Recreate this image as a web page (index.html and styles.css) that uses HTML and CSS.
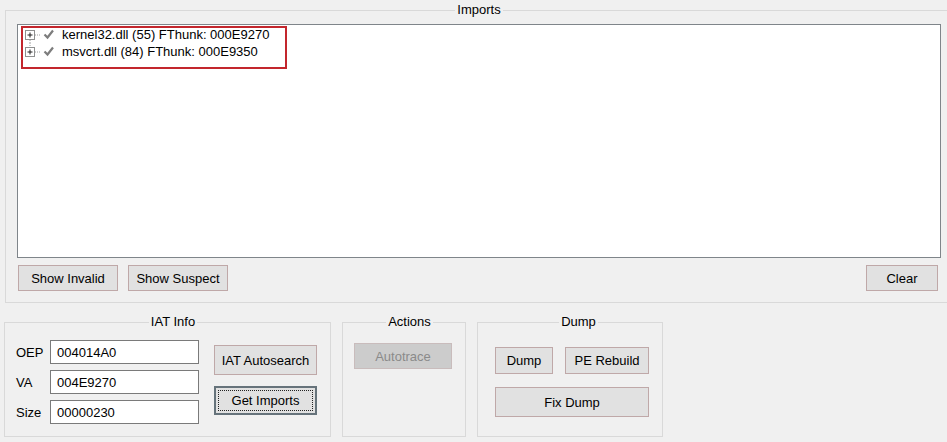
FILE: index.html
```html
<!DOCTYPE html>
<html>
<head>
<meta charset="utf-8">
<link rel="stylesheet" href="styles.css">
</head>
<body>
<div class="app">
  <fieldset class="group imports">
    <legend>Imports</legend>
    <div class="tree">
      <div class="tree-row">
        <svg class="tree-ico" width="44" height="17" viewBox="0 0 44 17">
          <rect x="7.5" y="4.5" width="9" height="9" fill="#fff" stroke="#8e8f8f"/>
          <path d="M9.5 9H14.5M12 6.5V11.5" stroke="#1f1f1f" stroke-width="1"/>
          <path d="M17 9H23" stroke="#a0a0a0" stroke-dasharray="1 1"/>
          <path d="M12 14V17" stroke="#a0a0a0" stroke-dasharray="1 1"/>
          <path d="M26.5 8.5L29.5 11.5L35 4.5" fill="none" stroke="#7d7d7d" stroke-width="2.2"/>
        </svg>
        <span>kernel32.dll (55) FThunk: 000E9270</span>
      </div>
      <div class="tree-row">
        <svg class="tree-ico" width="44" height="17" viewBox="0 0 44 17">
          <path d="M12 0V4" stroke="#a0a0a0" stroke-dasharray="1 1"/>
          <rect x="7.5" y="4.5" width="9" height="9" fill="#fff" stroke="#8e8f8f"/>
          <path d="M9.5 9H14.5M12 6.5V11.5" stroke="#1f1f1f" stroke-width="1"/>
          <path d="M17 9H23" stroke="#a0a0a0" stroke-dasharray="1 1"/>
          <path d="M26.5 8.5L29.5 11.5L35 4.5" fill="none" stroke="#7d7d7d" stroke-width="2.2"/>
        </svg>
        <span>msvcrt.dll (84) FThunk: 000E9350</span>
      </div>
      <div class="highlight"></div>
    </div>
    <div class="imports-bar">
      <button class="btn w100">Show Invalid</button>
      <button class="btn w100">Show Suspect</button>
      <span class="spacer"></span>
      <button class="btn clear">Clear</button>
    </div>
  </fieldset>

  <div class="bottom">
    <fieldset class="group iat">
      <legend>IAT Info</legend>
      <div class="iat-body">
        <div class="fields">
          <label>OEP</label><div class="input">004014A0</div>
          <label>VA</label><div class="input">004E9270</div>
          <label>Size</label><div class="input">00000230</div>
        </div>
        <div class="iat-btns">
          <button class="btn autosearch">IAT Autosearch</button>
          <button class="btn getimports"><span class="focus">Get Imports</span></button>
        </div>
      </div>
    </fieldset>

    <fieldset class="group actions">
      <legend>Actions</legend>
      <button class="btn disabled autotrace" disabled>Autotrace</button>
    </fieldset>

    <fieldset class="group dump">
      <legend>Dump</legend>
      <div class="dump-body">
        <div class="dump-row">
          <button class="btn dumpbtn">Dump</button>
          <button class="btn pebtn">PE Rebuild</button>
        </div>
        <button class="btn fixdump">Fix Dump</button>
      </div>
    </fieldset>
  </div>
</div>
</body>
</html>
```
FILE: styles.css
```css
* { box-sizing: border-box; }
html, body {
  margin: 0;
  padding: 0;
  background: #f0f0f0;
  width: 947px;
  height: 442px;
  overflow: hidden;
  font-family: "Liberation Sans", Arial, sans-serif;
  font-size: 13px;
  color: #000;
}
.app {
  display: flex;
  flex-direction: column;
  padding-top: 3px;
}
.group {
  margin: 0;
  border: 1px solid #d9d9d9;
  min-width: 0;
}
.group legend {
  margin: 0 auto;
  padding: 0 2px;
  line-height: 14px;
  height: 14px;
}
.imports {
  margin-left: 5px;
  width: 942px;
  border-right: none;
  padding: 7px 6px 11px 11px;
}
.tree {
  position: relative;
  height: 234px;
  background: #fff;
  border: 1px solid #7f858a;
  padding-top: 1px;
}
.tree-row {
  display: flex;
  align-items: center;
  height: 17px;
  white-space: nowrap;
}
.tree-ico { flex: none; display: block; }
.highlight {
  position: absolute;
  left: 3px;
  top: 1px;
  width: 266px;
  height: 43px;
  border: 2px solid #c3262d;
}
.imports-bar {
  display: flex;
  gap: 10px;
  margin-top: 7px;
  padding: 0 3px 0 1px;
}
.spacer { flex: 1; }
.btn {
  font: inherit;
  color: #000;
  background: #e1e1e1;
  border: 1px solid #bfa8a8;
  height: 26px;
  padding: 0;
  margin: 0;
  display: flex;
  align-items: center;
  justify-content: center;
}
.w100 { width: 100px; }
.clear { width: 72px; }

.bottom {
  display: flex;
  gap: 11px;
  margin-top: 12px;
  margin-left: 4px;
}
.iat {
  width: 327px;
  height: 122px;
  padding: 11px 0 0 11px;
}
.iat-body { display: flex; }
.fields {
  display: grid;
  grid-template-columns: 34px 149px;
  row-gap: 6px;
  align-items: center;
}
.fields label { padding-top: 1px; }
.input {
  height: 24px;
  background: #fff;
  border: 1px solid #7a7a7a;
  padding: 0 6px;
  display: flex;
  align-items: center;
}
.iat-btns {
  display: flex;
  flex-direction: column;
  gap: 11px;
  margin-left: 15px;
  padding-top: 5px;
}
.autosearch { width: 103px; height: 30px; }
.getimports {
  width: 103px;
  height: 29px;
  border: 2px solid #66737b;
  padding: 2px;
}
.getimports .focus {
  width: 100%;
  height: 100%;
  border: 1px dotted #222;
  display: flex;
  align-items: center;
  justify-content: center;
}
.actions {
  width: 124px;
  height: 122px;
  padding: 14px 0 0 11px;
}
.autotrace {
  width: 98px;
  height: 26px;
  background: #cccccc;
  border-color: #c9bcbc;
  color: #8a8a8a;
}
.dump {
  width: 186px;
  height: 122px;
  padding: 18px 0 0 17px;
}
.dump-body {
  display: flex;
  flex-direction: column;
  gap: 13px;
}
.dump-row { display: flex; gap: 12px; }
.dumpbtn { width: 58px; height: 27px; }
.pebtn { width: 84px; height: 27px; }
.fixdump { width: 154px; height: 30px; }
```
